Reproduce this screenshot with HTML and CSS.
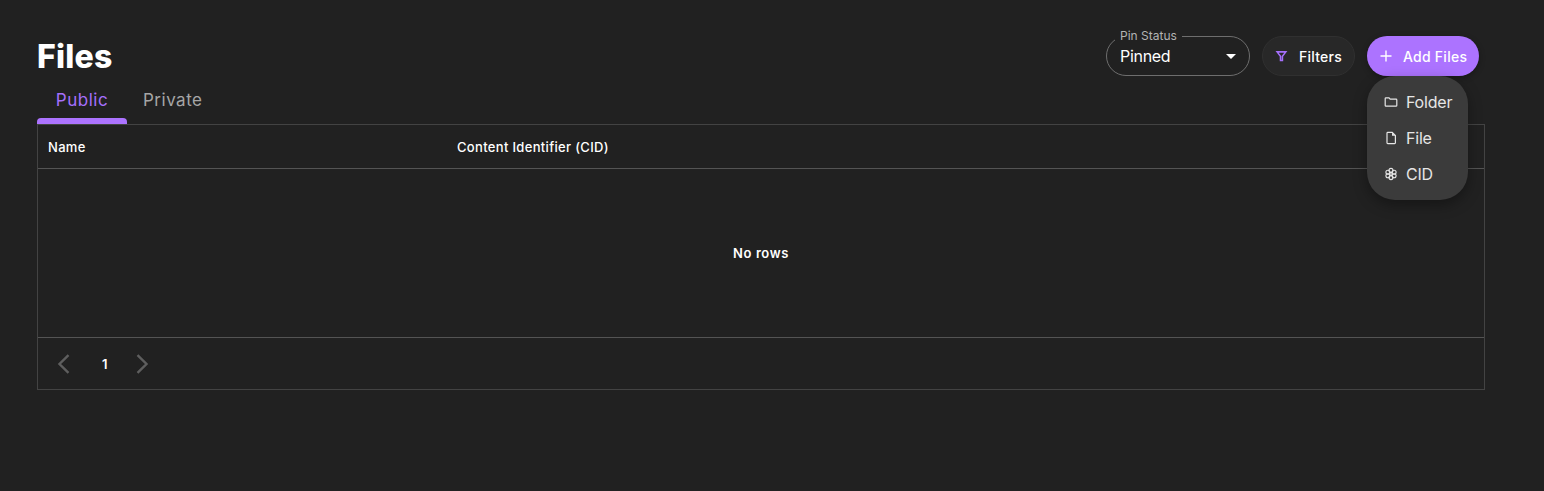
FILE: index.html
```html
<!DOCTYPE html>
<html lang="en">

<head>
  <meta charset="UTF-8">
  <meta name="viewport" content="width=device-width, initial-scale=1.0">
  <title>Files</title>
  <link rel="stylesheet" href="styles.css">
</head>

<body>
  <div class="page">
    <div class="header">
      <h1 class="title">Files</h1>
      <div class="actions">
        <div class="select">
          <span class="select-label">Pin Status</span>
          <span class="select-value">Pinned</span>
          <span class="select-arrow"></span>
        </div>
        <button class="btn btn-filter">
          <svg width="16" height="16" viewBox="0 0 16 16" fill="none" stroke="#a56ffb" stroke-width="1.900">
            <path d="M2.600 2.900h10.800L9.200 8.300v5.300H6.800V8.300z" />
          </svg>
          Filters
        </button>
        <div class="add-wrap">
          <button class="btn btn-add">
            <svg width="14" height="14" viewBox="0 0 14 14" stroke="#fff" stroke-width="1.400">
              <path d="M7 1.500v11M1.500 7h11" />
            </svg>
            Add Files
          </button>
          <div class="menu">
            <div class="menu-item">
              <svg width="14" height="14" viewBox="0 0 14 14" fill="none" stroke="#e6e6e6" stroke-width="1.200">
                <path d="M1.200 3.600q0-.8.8-.8h3l1.200 1.300H12q.8 0 .8.8v5.500q0 .8-.8.8H2q-.8 0-.8-.8z" />
              </svg>
              Folder
            </div>
            <div class="menu-item">
              <svg width="14" height="14" viewBox="0 0 14 14" fill="none" stroke="#e6e6e6" stroke-width="1.200">
                <path d="M3 2.200q0-.8.8-.8h4.400l3.200 3.200v7.200q0 .8-.8.8H3.800q-.8 0-.8-.8z" />
                <path d="M8 1.500v3.300h3.300" fill="#e6e6e6" stroke="none" />
              </svg>
              File
            </div>
            <div class="menu-item">
              <svg width="14" height="14" viewBox="0 0 14 14" fill="none" stroke="#e6e6e6" stroke-width="1.100">
                <circle cx="7" cy="3.400" r="2" />
                <circle cx="7" cy="10.600" r="2" />
                <circle cx="3.900" cy="5.200" r="2" />
                <circle cx="10.100" cy="5.200" r="2" />
                <circle cx="3.900" cy="8.800" r="2" />
                <circle cx="10.100" cy="8.800" r="2" />
                <circle cx="7" cy="7" r="1.300" />
              </svg>
              CID
            </div>
          </div>
        </div>
      </div>
    </div>

    <div class="tabs">
      <div class="tab active">Public</div>
      <div class="tab">Private</div>
    </div>

    <div class="grid">
      <div class="grid-head">
        <div class="col-name">Name</div>
        <div>Content Identifier (CID)</div>
      </div>
      <div class="grid-empty">No rows</div>
      <div class="grid-foot">
        <svg width="24" height="24" viewBox="0 0 24 24" fill="none" stroke="#5e5e5e" stroke-width="2.400">
          <path d="M16.500 3.200 7.500 12l9 8.800" />
        </svg>
        <span class="page-num">1</span>
        <svg width="24" height="24" viewBox="0 0 24 24" fill="none" stroke="#5e5e5e" stroke-width="2.400">
          <path d="M7.500 3.200 16.500 12l-9 8.800" />
        </svg>
      </div>
    </div>
  </div>
</body>

</html>
```

FILE: styles.css
```css
* {
  box-sizing: border-box;
}

body {
  margin: 0;
  background-color: #212121;
  color: #fff;
  font-family: Inter, "Liberation Sans", sans-serif;
}

.page {
  padding: 36px 59px 0 37px;
}

.header {
  display: flex;
  justify-content: space-between;
  height: 40px;
}

.title {
  margin: 0;
  padding-top: 1px;
  font-size: 32px;
  line-height: 40px;
  font-weight: 800;
  letter-spacing: 0.2px;
}

.actions {
  display: flex;
  gap: 12px;
  margin-right: 6px;
}

.select {
  position: relative;
  width: 144px;
  height: 40px;
  padding: 0 13px;
  border: 1px solid #6e6e6e;
  border-radius: 20px;
  display: flex;
  align-items: center;
}

.select-label {
  position: absolute;
  top: -8px;
  left: 8px;
  padding: 0 5px;
  background-color: #212121;
  color: #b3b3b3;
  font-size: 12px;
  line-height: 14px;
}

.select-value {
  font-size: 16px;
  letter-spacing: -0.3px;
}

.select-arrow {
  position: absolute;
  right: 13px;
  top: 17px;
  border-left: 5px solid transparent;
  border-right: 5px solid transparent;
  border-top: 5px solid #fff;
}

.btn {
  height: 40px;
  border: none;
  border-radius: 20px;
  color: #fff;
  font-family: inherit;
  font-size: 14px;
  font-weight: 500;
  letter-spacing: 0.25px;
  white-space: nowrap;
  display: flex;
  align-items: center;
}

.btn-filter {
  width: 93px;
  padding: 0 12px;
  gap: 11px;
  background-color: #282828;
  border: 1px solid #303030;
}

.btn-add {
  width: 112px;
  padding: 0 0 0 12px;
  gap: 10px;
  background-color: #ac73ff;
  box-shadow: 0 2px 6px rgba(0, 0, 0, 0.3);
}

.add-wrap {
  position: relative;
}

.menu {
  position: absolute;
  top: 40px;
  left: 0;
  width: 101px;
  height: 124px;
  padding: 8px 0;
  border-radius: 28px;
  background-color: #3b3b3b;
  box-shadow: 0 5px 14px rgba(0, 0, 0, 0.35);
  z-index: 2;
}

.menu-item {
  height: 36px;
  padding-left: 17px;
  display: flex;
  align-items: center;
  gap: 8px;
  font-size: 16px;
  letter-spacing: -0.2px;
  color: #e6e6e6;
}

.tabs {
  display: flex;
  height: 48px;
}

.tab {
  padding: 0 16px;
  display: flex;
  align-items: center;
  justify-content: center;
  height: 48px;
  font-size: 17px;
  letter-spacing: 0.5px;
  color: #a6a6a6;
}

.tab.active {
  position: relative;
  width: 90px;
  color: #a56ffb;
}

.tab.active::after {
  content: "";
  position: absolute;
  left: 0;
  right: 0;
  bottom: 0;
  height: 6px;
  background-color: #ac73ff;
  border-radius: 4px 4px 0 0;
}

.grid {
  border: 1px solid #434343;
  font-size: 13px;
  font-weight: 500;
  letter-spacing: 0.33px;
}

.grid-head {
  height: 44px;
  border-bottom: 1px solid #545454;
  padding-left: 10px;
  display: flex;
  align-items: center;
}

.col-name {
  width: 409px;
}

.grid-empty {
  height: 169px;
  border-bottom: 1px solid #545454;
  display: flex;
  align-items: center;
  justify-content: center;
  font-weight: 600;
  letter-spacing: 0.6px;
}

.grid-foot {
  height: 51px;
  padding-left: 14px;
  display: flex;
  align-items: center;
}

.page-num {
  margin: 0 22px 0 26px;
  font-weight: 600;
}
```
